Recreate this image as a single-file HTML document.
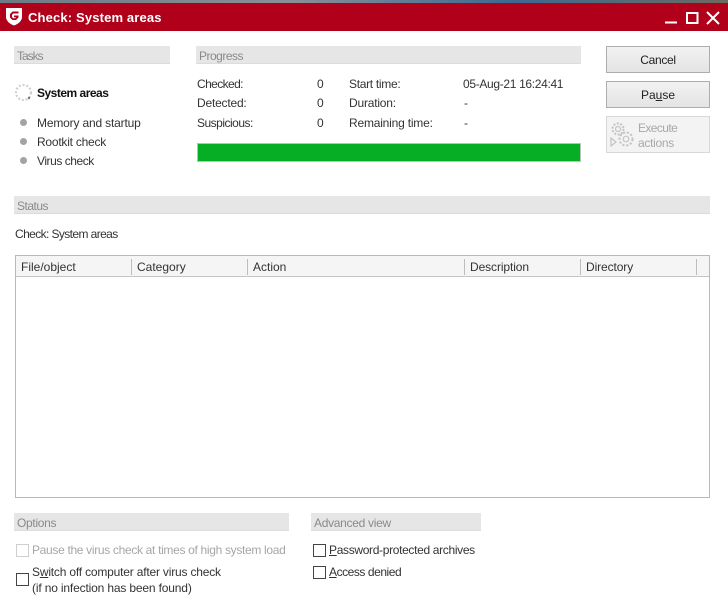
<!DOCTYPE html>
<html><head><meta charset="utf-8"><style>
html,body{margin:0;padding:0;width:728px;height:608px;overflow:hidden;background:#fff}
body{position:relative;font-family:"Liberation Sans",sans-serif;font-size:12px;color:#333}
.a{position:absolute;white-space:nowrap;line-height:16px}
.h{position:absolute;background:#e6e6e6;border-bottom:1px solid #dcdcdc;height:17px;line-height:21px;color:#8a8a8a;padding-left:3px;box-sizing:content-box;overflow:hidden}
.btn{position:absolute;left:606px;width:102px;height:25px;border:1px solid #adadad;background:linear-gradient(#f2f2f2,#e4e4e4);text-align:center;line-height:27px;color:#222}
.dot{position:absolute;left:20px;width:7px;height:7px;border-radius:50%;background:#a3a3a3}
.cb{position:absolute;width:11px;height:11px;border:1px solid #444;background:#fff}
.sep{position:absolute;top:259px;width:1px;height:16px;background:#bdbdbd}
u{text-underline-offset:1px}
</style></head><body>
<div style="position:absolute;left:0;top:0;width:728px;height:3px;background:linear-gradient(90deg,#6d7a86,#8a8f96 40%,#3d6a92 70%,#6d6a60)"></div>
<div style="position:absolute;left:0;top:3px;width:728px;height:28px;background:#b0001a"></div>
<svg style="position:absolute;left:5px;top:7px" width="18" height="19" viewBox="0 0 18 19"><path d="M1 1H17V10C17 14 13 17 9 18.500C5 17 1 14 1 10Z" fill="#fff"/><path d="M13.500 4.500H7.500L5 7V10.500L7.500 13H11L13.500 10.500V8.500H9V10.300H11.300L10.200 11.200H8.200L7 10V7.800L8.200 6.500H13.500Z" fill="#b0001a"/></svg>
<div class="a" style="left:28px;top:10px;color:#fff;font-weight:bold;font-size:13px;letter-spacing:.15px">Check: System areas</div>
<svg style="position:absolute;left:660px;top:8px" width="62" height="18" viewBox="0 0 62 18" fill="none" stroke="#fff"><path d="M5 14.500H17" stroke-width="2"/><rect x="27" y="5" width="10.500" height="10" stroke-width="2"/><path d="M47 4L59 16M59 4L47 16" stroke-width="2"/></svg>

<div class="h" style="left:14px;top:46px;width:153px;letter-spacing:-1px">Tasks</div>
<svg style="position:absolute;left:14px;top:83px" width="20" height="20" viewBox="0 0 20 20" fill="none"><circle cx="9.500" cy="9.500" r="7.500" stroke="#d0d0d0" stroke-width="2.200" stroke-dasharray="2 1.800"/><circle cx="15" cy="15" r="1.200" fill="#777"/></svg>
<div class="a" style="left:37px;top:85px;font-weight:bold;color:#111;letter-spacing:-.5px">System areas</div>
<div class="dot" style="top:119px"></div><div class="a" style="left:37px;top:115px;letter-spacing:-.17px">Memory and startup</div>
<div class="dot" style="top:138px"></div><div class="a" style="left:37px;top:134px;letter-spacing:-.23px">Rootkit check</div>
<div class="dot" style="top:157px"></div><div class="a" style="left:37px;top:153px;letter-spacing:-.45px">Virus check</div>

<div class="h" style="left:196px;top:46px;width:382px;letter-spacing:-.5px">Progress</div>
<div class="a" style="left:197px;top:76px;letter-spacing:-.6px">Checked:</div><div class="a" style="left:317px;top:76px">0</div>
<div class="a" style="left:197px;top:95px;letter-spacing:-.2px">Detected:</div><div class="a" style="left:317px;top:95px">0</div>
<div class="a" style="left:197px;top:115px;letter-spacing:-.5px">Suspicious:</div><div class="a" style="left:317px;top:115px">0</div>
<div class="a" style="left:349px;top:76px;letter-spacing:-.3px">Start time:</div><div class="a" style="left:463px;top:76px;letter-spacing:-.33px">05-Aug-21 16:24:41</div>
<div class="a" style="left:349px;top:95px;letter-spacing:-.2px">Duration:</div><div class="a" style="left:464px;top:95px">-</div>
<div class="a" style="left:349px;top:115px;letter-spacing:-.2px">Remaining time:</div><div class="a" style="left:464px;top:115px">-</div>
<div style="position:absolute;left:197px;top:143px;width:382px;height:17px;background:#06ae26;border:1px solid #b5c4b5"></div>

<div class="btn" style="top:46px;letter-spacing:-.3px">Cancel</div>
<div class="btn" style="top:81px">Pa<u>u</u>se</div>
<div class="btn" style="top:116px;height:35px;background:#f3f3f3;border-color:#d8d8d8"></div>
<svg style="position:absolute;left:609px;top:121px" width="27" height="28" viewBox="0 0 27 28" fill="none" stroke="#c4c4c4" stroke-width="1.200"><circle cx="9" cy="8" r="2.500"/><circle cx="9" cy="8" r="5.500" stroke-width="2" stroke-dasharray="2 1.500"/><circle cx="17" cy="18" r="2.800"/><circle cx="17" cy="18" r="6.500" stroke-width="2" stroke-dasharray="2.200 1.700"/><path d="M2 17L7 21L2 25Z"/></svg>
<div class="a" style="left:638px;top:120px;color:#a8a8a8;letter-spacing:-.6px">Execute</div>
<div class="a" style="left:638px;top:135px;color:#a8a8a8;letter-spacing:-.3px">actions</div>

<div class="h" style="left:14px;top:196px;width:693px;letter-spacing:-.5px">Status</div>
<div class="a" style="left:15px;top:226px;letter-spacing:-.6px">Check: System areas</div>
<div style="position:absolute;left:15px;top:255px;width:693px;height:241px;border:1px solid #b8b8b8"></div>
<div style="position:absolute;left:16px;top:256px;width:693px;height:20px;background:#f5f5f5;border-bottom:1px solid #c4c4c4"></div>
<div class="sep" style="left:131px"></div><div class="sep" style="left:247px"></div><div class="sep" style="left:464px"></div><div class="sep" style="left:580px"></div><div class="sep" style="left:696px"></div>
<div class="a" style="left:21px;top:259px">File/object</div>
<div class="a" style="left:137px;top:259px">Category</div>
<div class="a" style="left:253px;top:259px">Action</div>
<div class="a" style="left:470px;top:259px;letter-spacing:-.1px">Description</div>
<div class="a" style="left:586px;top:259px;letter-spacing:-.1px">Directory</div>

<div class="h" style="left:14px;top:513px;width:272px;letter-spacing:-.3px">Options</div>
<div class="cb" style="left:16px;top:544px;border-color:#cfcfcf"></div>
<div class="a" style="left:32px;top:542px;color:#a6a6a6;letter-spacing:-.32px">Pause the virus check at times of high system load</div>
<div class="cb" style="left:16px;top:573px"></div>
<div class="a" style="left:32px;top:564px;letter-spacing:-.19px">S<u>w</u>itch off computer after virus check</div>
<div class="a" style="left:32px;top:580px;letter-spacing:-.16px">(if no infection has been found)</div>

<div class="h" style="left:311px;top:513px;width:167px;letter-spacing:-.3px">Advanced view</div>
<div class="cb" style="left:313px;top:544px"></div>
<div class="a" style="left:329px;top:542px;letter-spacing:-.33px"><u>P</u>assword-protected archives</div>
<div class="cb" style="left:313px;top:566px"></div>
<div class="a" style="left:329px;top:564px;letter-spacing:-.45px"><u>A</u>ccess denied</div>
</body></html>
